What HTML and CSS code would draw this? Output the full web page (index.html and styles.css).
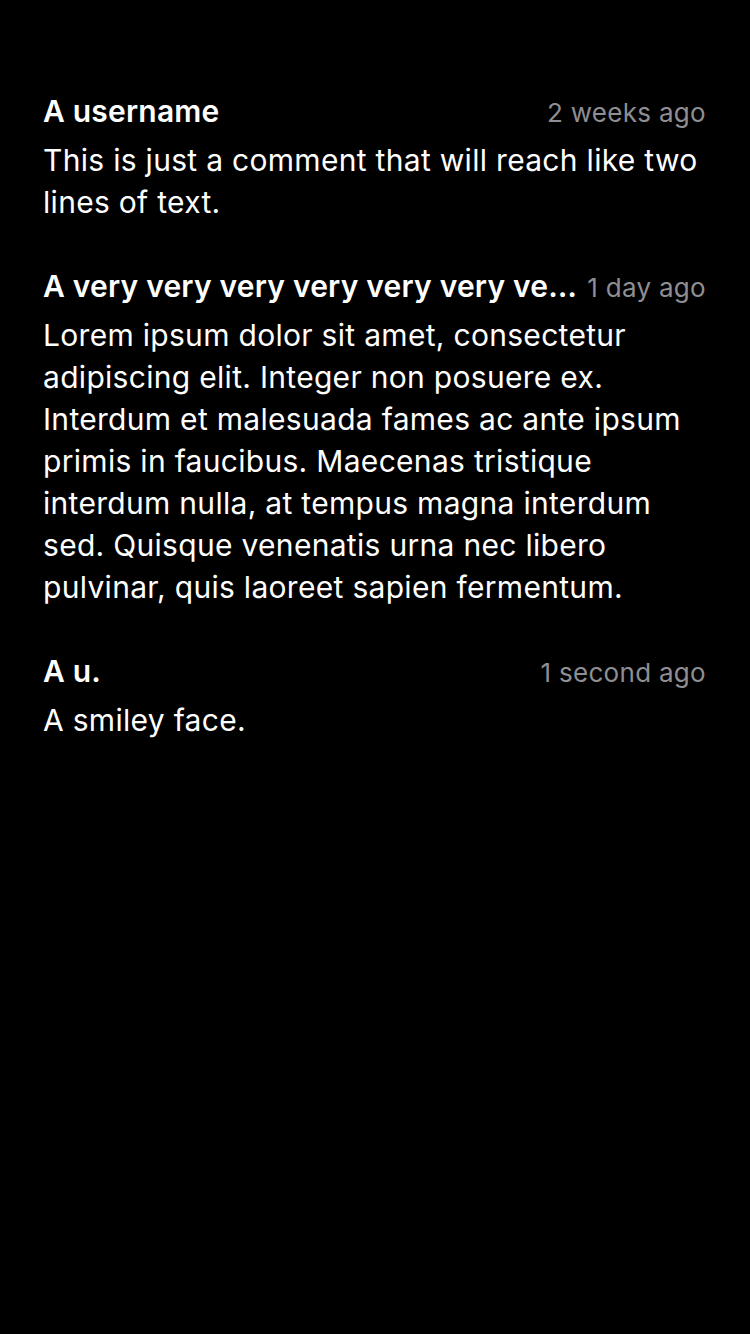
FILE: index.html
```html
<!DOCTYPE html>
<html lang="en">
<head>
<meta charset="utf-8">
<link rel="stylesheet" href="styles.css">
</head>
<body>
<main class="comments">
  <article class="comment">
    <header class="comment-head">
      <span class="author">A username</span>
      <span class="time">2 weeks ago</span>
    </header>
    <p class="body">This is just a comment that will reach like two lines of text.</p>
  </article>
  <article class="comment">
    <header class="comment-head">
      <span class="author">A very very very very very very very very long username</span>
      <span class="time">1 day ago</span>
    </header>
    <p class="body">Lorem ipsum dolor sit amet, consectetur adipiscing elit. Integer non posuere ex. Interdum et malesuada fames ac ante ipsum primis in faucibus. Maecenas tristique interdum nulla, at tempus magna interdum sed. Quisque venenatis urna nec libero pulvinar, quis laoreet sapien fermentum.</p>
  </article>
  <article class="comment">
    <header class="comment-head">
      <span class="author">A u.</span>
      <span class="time">1 second ago</span>
    </header>
    <p class="body">A smiley face.</p>
  </article>
</main>
</body>
</html>
```
FILE: styles.css
```css
html, body {
  margin: 0;
  padding: 0;
  background: #000;
  height: 100%;
}
body {
  font-family: Inter, "Liberation Sans", sans-serif;
  color: #fff;
}
.comments {
  padding: 92px 44px 0 43px;
  display: flex;
  flex-direction: column;
  gap: 44px;
}
.comment {
  display: flex;
  flex-direction: column;
  gap: 9px;
}
.comment-head {
  display: flex;
  align-items: baseline;
  gap: 8px;
  height: 38px;
  line-height: 38px;
}
.author {
  flex: 1 1 auto;
  min-width: 0;
  font-size: 30px;
  font-weight: 600;
  letter-spacing: 0.2px;
  white-space: nowrap;
  overflow: hidden;
  text-overflow: ellipsis;
}
.time {
  flex: 0 0 auto;
  font-size: 26px;
  letter-spacing: 0.3px;
  color: #8e8e93;
}
.body {
  margin: 0;
  font-size: 30px;
  letter-spacing: 0.3px;
  line-height: 42px;
}
```
